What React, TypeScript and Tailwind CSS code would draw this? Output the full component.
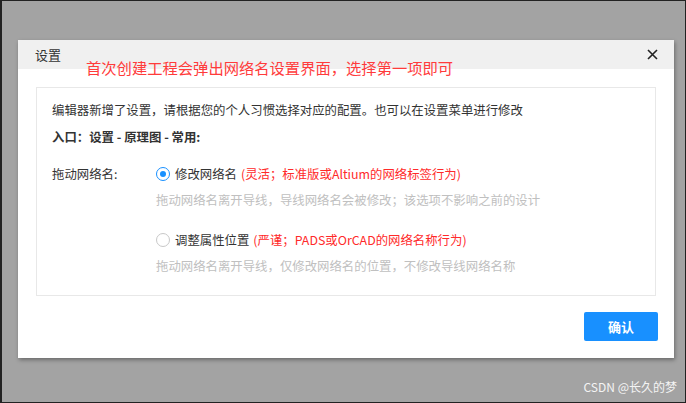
import React from "react";

const font = { fontFamily: '"Microsoft YaHei", "Noto Sans CJK SC", "Liberation Sans", sans-serif' };

export default function App() {
  return (
    <div
      className="relative w-[686px] h-[403px] bg-[#a3a3a3] border border-[#222] border-l-2 overflow-hidden"
      style={font}
    >
      <div className="absolute left-[16px] top-[39px] w-[656px] h-[318px] bg-white shadow-[1px_2px_4px_rgba(0,0,0,0.35)] flex flex-col">
        <div className="h-[29px] bg-[#f0f0f0] flex items-center justify-between pl-[17px] pr-[16px]">
          <span className="text-[13px] text-[#333]">设置</span>
          <svg width="11" height="11" viewBox="0 0 11 11">
            <path d="M1 1L10 10M10 1L1 10" stroke="#222" strokeWidth="1.6" />
          </svg>
        </div>
        <div className="px-[18px] pt-[18px]">
          <div className="border border-[#e8e8e8] h-[209px] pl-[15px] pt-[13px] text-[12.4px] text-[#333]">
            <div className="leading-[18px]">编辑器新增了设置，请根据您的个人习惯选择对应的配置。也可以在设置菜单进行修改</div>
            <div className="leading-[18px] mt-[9px] font-bold">入口：设置 - 原理图 - 常用:</div>
            <div className="flex mt-[19px]">
              <div className="w-[104px] leading-[18px]">拖动网络名:</div>
              <div className="flex flex-col">
                <div className="flex items-center leading-[18px]">
                  <span className="w-[14px] h-[14px] rounded-full border border-[#1890ff] flex items-center justify-center mr-[5px]">
                    <span className="w-[6px] h-[6px] rounded-full bg-[#1890ff]" />
                  </span>
                  <span>修改网络名</span>
                  <span className="text-[#ff2a2a] ml-[4px]">(灵活；标准版或Altium的网络标签行为)</span>
                </div>
                <div className="text-[#c0c0c0] leading-[18px] mt-[8px]">拖动网络名离开导线，导线网络名会被修改；该选项不影响之前的设计</div>
                <div className="flex items-center leading-[18px] mt-[22px]">
                  <span className="w-[14px] h-[14px] rounded-full border border-[#c8c8c8] mr-[5px]" />
                  <span>调整属性位置</span>
                  <span className="text-[#ff2a2a] ml-[4px]">(严谨；PADS或OrCAD的网络名称行为)</span>
                </div>
                <div className="text-[#c0c0c0] leading-[18px] mt-[8px]">拖动网络名离开导线，仅修改网络名的位置，不修改导线网络名称</div>
              </div>
            </div>
          </div>
        </div>
        <div className="flex justify-end pr-[16px] mt-[16px]">
          <div className="w-[74px] h-[29px] bg-[#1890ff] rounded-[2px] text-white text-[13px] font-bold flex items-center justify-center">
            确认
          </div>
        </div>
      </div>
      <div className="absolute left-[84px] top-[56px] text-[15.3px] leading-[20px] text-[#ff3b3b] whitespace-nowrap">
        首次创建工程会弹出网络名设置界面，选择第一项即可
      </div>
      <div className="absolute right-[8px] bottom-[6px] text-[12px] text-[#f4f4f4] whitespace-nowrap">
        CSDN @长久的梦
      </div>
    </div>
  );
}
